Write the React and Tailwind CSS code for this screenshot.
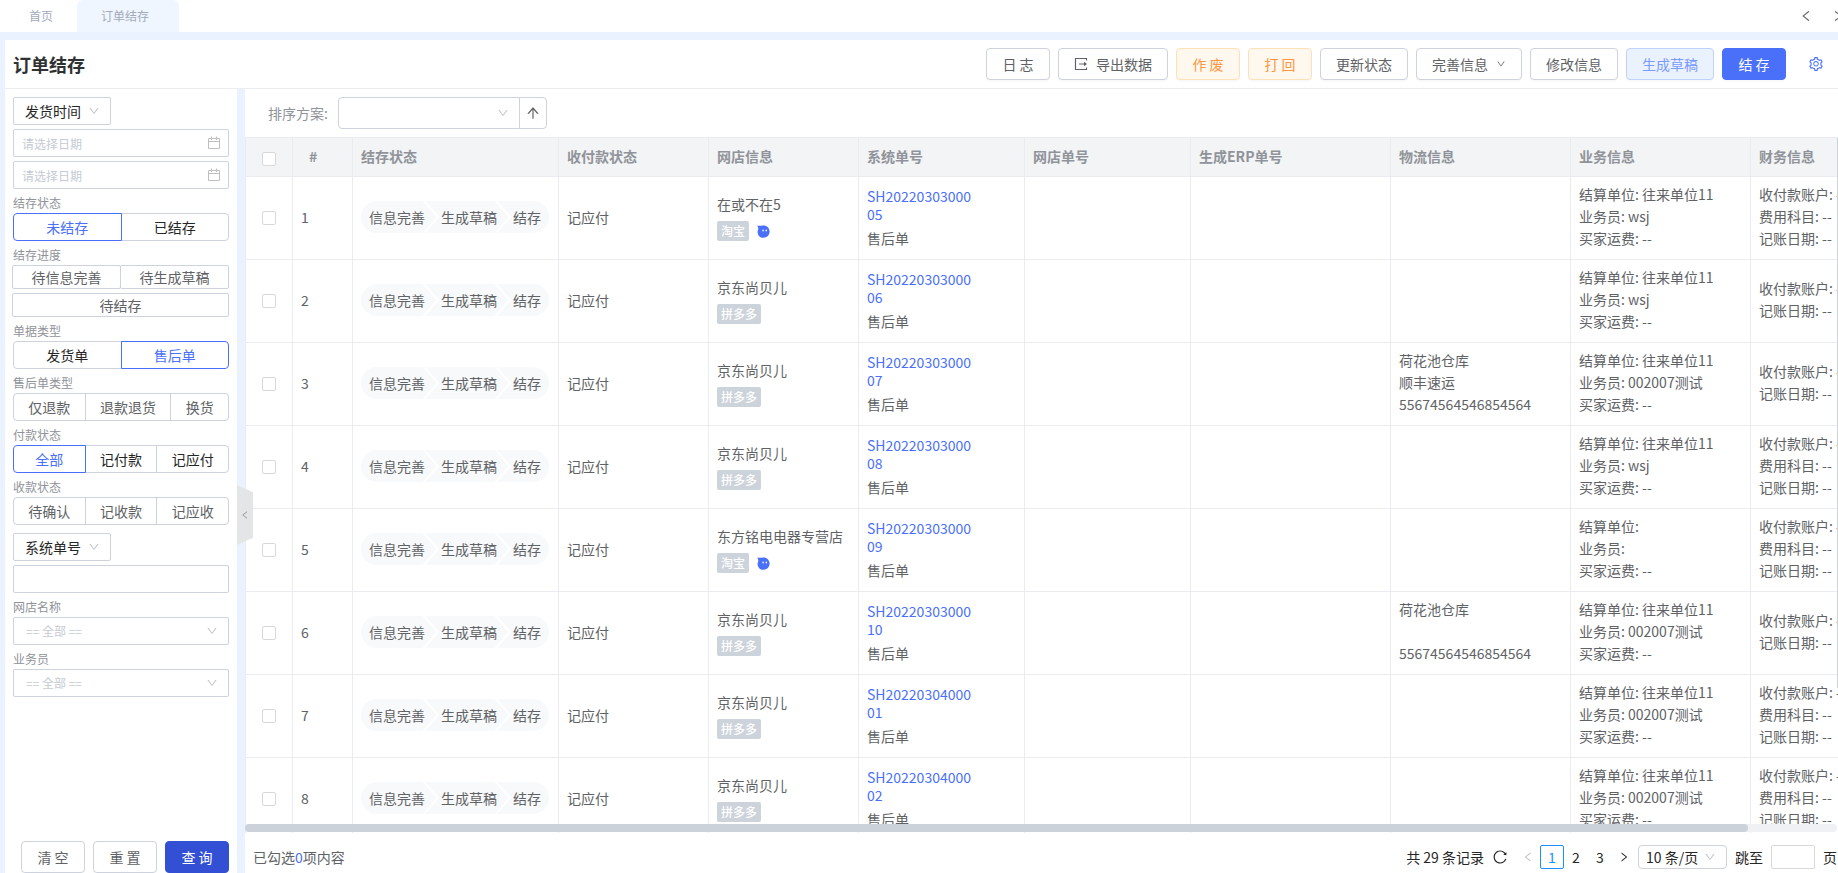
import { useState } from "react";
import {
  AiOutlineArrowUp,
  AiOutlineDown,
  AiOutlineLeft,
  AiOutlineReload,
  AiOutlineRight,
  AiOutlineSetting,
} from "react-icons/ai";

const COLUMNS = [
  { key: "status", label: "结存状态", width: "w-[206px]" },
  { key: "pay", label: "收付款状态", width: "w-[150px]" },
  { key: "shop", label: "网店信息", width: "w-[150px]" },
  { key: "sysNo", label: "系统单号", width: "w-[166px]" },
  { key: "shopNo", label: "网店单号", width: "w-[166px]" },
  { key: "erpNo", label: "生成ERP单号", width: "w-[200px]" },
  { key: "logistics", label: "物流信息", width: "w-[180px]" },
  { key: "business", label: "业务信息", width: "w-[180px]" },
  { key: "finance", label: "财务信息", width: "w-[180px]" },
];

const FULL = ["收付款账户: --", "费用科目: --", "记账日期: --"];
const SHORT = ["收付款账户: --", "记账日期: --"];

const ROWS = [
  { shop: "在或不在5", tag: "淘宝", no: "SH2022030300005", unit: "往来单位11", staff: "wsj", finance: FULL },
  { shop: "京东尚贝儿", tag: "拼多多", no: "SH2022030300006", unit: "往来单位11", staff: "wsj", finance: SHORT },
  {
    shop: "京东尚贝儿",
    tag: "拼多多",
    no: "SH2022030300007",
    logistics: ["荷花池仓库", "顺丰速运", "55674564546854564"],
    unit: "往来单位11",
    staff: "002007测试",
    finance: SHORT,
  },
  { shop: "京东尚贝儿", tag: "拼多多", no: "SH2022030300008", unit: "往来单位11", staff: "wsj", finance: FULL },
  { shop: "东方铭电电器专营店", tag: "淘宝", no: "SH2022030300009", unit: "", staff: "", finance: FULL },
  {
    shop: "京东尚贝儿",
    tag: "拼多多",
    no: "SH2022030300010",
    logistics: ["荷花池仓库", "", "55674564546854564"],
    unit: "往来单位11",
    staff: "002007测试",
    finance: SHORT,
  },
  { shop: "京东尚贝儿", tag: "拼多多", no: "SH2022030400001", unit: "往来单位11", staff: "002007测试", finance: FULL },
  { shop: "京东尚贝儿", tag: "拼多多", no: "SH2022030400002", unit: "往来单位11", staff: "002007测试", finance: FULL },
];

function ExportIcon({ className }) {
  return (
    <svg viewBox="0 0 14 14" className={className} fill="none" stroke="currentColor">
      <path d="M12.5 3.5 V1.5 H1.5 V12.5 H12.5 V10.5" strokeWidth="1.2" />
      <path d="M5 7 H12" strokeWidth="1" />
      <path d="M10 4.8 L13 7 L10 9.2 Z" fill="currentColor" stroke="none" />
    </svg>
  );
}

function CalendarIcon({ className }) {
  return (
    <svg viewBox="0 0 14 14" className={className} fill="none" stroke="currentColor">
      <path d="M1.5 2.5 H12.5 V12.5 H1.5 Z M1.5 5.5 H12.5 M4.5 0.5 V4 M9.5 0.5 V4" />
    </svg>
  );
}

function Checkbox({ label }) {
  return (
    <input
      type="checkbox"
      aria-label={label}
      className="block size-3.5 appearance-none rounded-xs border border-[#d9d9d9] bg-white checked:border-[#4a70fa] checked:bg-[#4a70fa]"
    />
  );
}

function HeadButton({ children, className = "border-[#cdd2dc] bg-white text-[#606266]" }) {
  return (
    <button
      type="button"
      className={`flex h-8 min-w-16 items-center justify-center rounded border px-[15px] whitespace-pre shadow-[0_2px_0_rgba(0,0,0,0.02)] ${className}`}
    >
      {children}
    </button>
  );
}

function SelectBox({ label, value, className, selectClass, iconClass = "right-[11px]", id }) {
  return (
    <div className={`relative ${className}`}>
      <select
        id={id}
        aria-label={label}
        className={`block size-full appearance-none border border-[#cdd2dc] bg-white ${selectClass}`}
      >
        <option>{value}</option>
      </select>
      <AiOutlineDown
        className={`pointer-events-none absolute top-1/2 size-3 -translate-y-1/2 text-[#bfc3c9] ${iconClass}`}
      />
    </div>
  );
}

function FieldLabel({ children, htmlFor }) {
  return (
    <label htmlFor={htmlFor} className="mt-1 block h-5 text-xs leading-5 text-[#909399]">
      {children}
    </label>
  );
}

function ButtonGroup({ label, options, initial = "", muted = false, natural = false }) {
  const [active, setActive] = useState(initial);
  return (
    <div role="group" aria-label={label}>
      <FieldLabel>{label}</FieldLabel>
      <div className="flex">
        {options.map((opt) => (
          <button
            key={opt}
            type="button"
            aria-pressed={active === opt}
            onClick={() => setActive(opt)}
            className={`-ml-px h-7 border first:ml-0 first:rounded-l last:rounded-r ${
              natural ? "flex-auto" : "flex-1"
            } ${
              active === opt
                ? "relative border-[#4a70fa] text-[#4a70fa]"
                : muted
                  ? "border-[#cdd2dc] text-[#606266]"
                  : "border-[#cdd2dc] text-[#262626]"
            }`}
          >
            {opt}
          </button>
        ))}
      </div>
    </div>
  );
}

function DateInput({ label }) {
  return (
    <div className="relative mt-1 h-7">
      <input
        type="text"
        aria-label={label}
        placeholder="请选择日期"
        className="block size-full rounded-xs border border-[#cdd2dc] px-2 text-xs placeholder:text-[#c5cbd4]"
      />
      <CalendarIcon className="pointer-events-none absolute top-1/2 right-2 size-3.5 -translate-y-1/2 text-[#bfbfbf]" />
    </div>
  );
}

function Sidebar() {
  return (
    <aside className="flex w-[232px] shrink-0 flex-col bg-white pt-2 pr-2 pl-2">
      <div className="flex-1">
        <SelectBox
          label="时间类型"
          value="发货时间"
          className="h-7 w-[98px]"
          selectClass="rounded-xs pl-[11px] text-[#262626]"
        />
        <DateInput label="开始日期" />
        <DateInput label="结束日期" />

        <ButtonGroup label="结存状态" options={["未结存", "已结存"]} initial="未结存" />

        <FieldLabel>结存进度</FieldLabel>
        <div className="-ml-px flex flex-wrap gap-y-1 text-[#606266]">
          <button type="button" className="h-6 flex-1 rounded-xs border border-[#cdd2dc] leading-5">
            待信息完善
          </button>
          <button type="button" className="-ml-px h-6 flex-1 rounded-xs border border-[#cdd2dc] leading-5">
            待生成草稿
          </button>
          <button type="button" className="h-6 w-full rounded-xs border border-[#cdd2dc] leading-5">
            待结存
          </button>
        </div>

        <ButtonGroup label="单据类型" options={["发货单", "售后单"]} initial="售后单" />
        <ButtonGroup label="售后单类型" options={["仅退款", "退款退货", "换货"]} muted natural />
        <ButtonGroup label="付款状态" options={["全部", "记付款", "记应付"]} initial="全部" />
        <ButtonGroup label="收款状态" options={["待确认", "记收款", "记应收"]} muted />

        <SelectBox
          label="单号类型"
          value="系统单号"
          className="mt-2 h-7 w-[98px]"
          selectClass="rounded-xs pl-[11px] text-[#262626]"
        />
        <input
          type="text"
          aria-label="单号"
          className="mt-1 block h-7 w-full rounded-xs border border-[#cdd2dc] px-2"
        />

        <FieldLabel htmlFor="shop-name">网店名称</FieldLabel>
        <SelectBox
          id="shop-name"
          value="== 全部 =="
          className="h-7"
          selectClass="rounded-xs pl-3 text-xs text-[#c5cbd4]"
        />
        <FieldLabel htmlFor="staff">业务员</FieldLabel>
        <SelectBox
          id="staff"
          value="== 全部 =="
          className="h-7"
          selectClass="rounded-xs pl-3 text-xs text-[#c5cbd4]"
        />
      </div>

      <div className="flex justify-end gap-2">
        <HeadButton>清 空</HeadButton>
        <HeadButton>重 置</HeadButton>
        <HeadButton className="border-[#334fd4] bg-[#334fd4] text-white">查 询</HeadButton>
      </div>
    </aside>
  );
}

function StepArrow() {
  return (
    <svg viewBox="0 0 16 32" className="h-8 w-4 overflow-visible" fill="none">
      <path d="M-2 -1 L13 16 L-2 33" stroke="#fff" strokeWidth="2" />
    </svg>
  );
}

function Steps() {
  return (
    <div className="flex h-8 w-fit items-center overflow-hidden rounded-full bg-[#f7f9fb] px-2">
      <span>信息完善</span>
      <StepArrow />
      <span>生成草稿</span>
      <StepArrow />
      <span>结存</span>
    </div>
  );
}

function WangwangIcon() {
  return (
    <svg viewBox="0 0 13 13" className="size-[13px]">
      <path d="M0.3 0.6 C2.2 0.9 3.8 0.9 5.6 0.6 C9.6 0.1 12.6 3 12.6 6.6 C12.6 10.1 9.9 12.8 6.4 12.8 C3 12.8 0.6 10.2 0.6 6.9 C0.6 5.7 1 4.7 1.4 3.9 C1.2 2.6 0.9 1.6 0.3 0.6 Z" fill="#4a70fa" />
      <rect x="5.4" y="4.4" width="1.4" height="2" rx="0.7" fill="#fff" />
      <rect x="8.6" y="4.4" width="1.4" height="2" rx="0.7" fill="#fff" />
    </svg>
  );
}

function Lines({ items }) {
  return items.map((text, i) => (
    <div key={i} className="h-[22px] whitespace-nowrap">
      {text}
    </div>
  ));
}

function OrderTable() {
  return (
    <table className="w-[1686px] table-fixed border-separate border-spacing-0 border-l border-[#ebecf2]">
      <thead>
        <tr className="h-10 bg-[#f2f4f5] text-left text-[#909399] [&>th]:border-y [&>th]:border-r [&>th]:border-[#ebecf2]">
          <th className="w-[47px] pl-4 align-middle">
            <div className="pt-1">
              <Checkbox label="全选" />
            </div>
          </th>
          <th className="w-[60px] pb-0.5 pl-4">#</th>
          {COLUMNS.map((col) => (
            <th key={col.key} className={`px-2 pb-0.5 ${col.width}`}>
              {col.label}
            </th>
          ))}
        </tr>
      </thead>
      <tbody>
        {ROWS.map((row, i) => (
          <tr key={row.no} className="h-[83px] [&>td]:border-r [&>td]:border-b [&>td]:border-[#ebecf2]">
            <td className="pl-4">
              <Checkbox label={`选择 ${row.no}`} />
            </td>
            <td className="px-2 pb-0.5">{i + 1}</td>
            <td className="px-2 pb-0.5">
              <Steps />
            </td>
            <td className="px-2 pb-0.5">记应付</td>
            <td className="px-2 pb-0.5">
              <div className="whitespace-nowrap">{row.shop}</div>
              <div className="mt-1.5 flex items-center gap-2">
                <span className="rounded-xs bg-[#cdd3db] px-1 text-xs leading-5 font-medium text-white">{row.tag}</span>
                {row.tag === "淘宝" && <WangwangIcon />}
              </div>
            </td>
            <td className="px-2">
              <a href="#" className="block w-[108px] leading-[18px] break-all text-[#4a70fa]">
                {row.no}
              </a>
              <div className="mt-1">售后单</div>
            </td>
            <td />
            <td />
            <td className="px-2 pb-1">
              <Lines items={row.logistics ?? []} />
            </td>
            <td className="px-2 pb-1">
              <Lines items={[`结算单位: ${row.unit}`, `业务员: ${row.staff}`, "买家运费: --"]} />
            </td>
            <td className="px-2 pb-1">
              <Lines items={row.finance} />
            </td>
          </tr>
        ))}
      </tbody>
    </table>
  );
}

function Pagination() {
  return (
    <nav className="flex h-6 items-center pr-px text-[#262626]">
      <span>共 29 条记录</span>
      <button type="button" aria-label="刷新" className="ml-2">
        <AiOutlineReload className="size-4" />
      </button>
      <button type="button" aria-label="上一页" className="ml-2 flex size-6 items-center justify-center text-[#bfbfbf]">
        <AiOutlineLeft className="size-3" />
      </button>
      <button type="button" className="size-6 rounded-xs border border-[#1890ff] text-[#1890ff]">
        1
      </button>
      <button type="button" className="size-6">
        2
      </button>
      <button type="button" className="size-6">
        3
      </button>
      <button type="button" aria-label="下一页" className="flex size-6 items-center justify-center">
        <AiOutlineRight className="size-3" />
      </button>
      <SelectBox
        label="每页条数"
        value="10 条/页"
        className="ml-0.5 h-6 w-[89px]"
        selectClass="rounded pl-[7px]"
      />
      <label htmlFor="jump" className="ml-2">
        跳至
      </label>
      <input id="jump" type="text" className="mx-2 h-6 w-11 rounded-xs border border-[#d9d9d9] px-1" />
      <span>页</span>
    </nav>
  );
}

function App() {
  return (
    <div className="flex h-screen flex-col overflow-hidden bg-[#ebf2ff] font-['Noto_Sans_CJK_SC',sans-serif] text-sm leading-[22px] text-[#606266]">
      {/* Page tabs */}
      <div className="flex h-8 shrink-0 items-end justify-between bg-white pl-[5px] text-xs text-[#a3aabb]">
        <div className="flex h-8">
          <button type="button" className="w-[72px]">
            首页
          </button>
          <button type="button" className="w-[102px] rounded-t-md bg-[#eff6ff] pl-6 text-left">
            订单结存
          </button>
        </div>
        <div className="-mr-4 flex h-8 text-[#606266]">
          <button type="button" aria-label="向左" className="flex w-8 items-center justify-center">
            <AiOutlineLeft className="size-3.5" />
          </button>
          <button type="button" aria-label="向右" className="flex w-8 items-center justify-center">
            <AiOutlineRight className="size-3.5" />
          </button>
        </div>
      </div>

      <header className="mt-2 ml-[5px] flex h-[49px] shrink-0 items-center justify-between border-b border-[#ebecf2] bg-white pr-3.5 pl-2">
        <h1 className="text-lg font-bold text-[#303133]">订单结存</h1>
        <div className="flex items-center gap-2">
          <HeadButton>日 志</HeadButton>
          <HeadButton>
            <ExportIcon className="mr-2 size-3.5" />
            导出数据
          </HeadButton>
          <HeadButton className="border-[#ffdfb8] bg-[#fff8ee] text-[#ff9540]">作 废</HeadButton>
          <HeadButton className="border-[#ffdfb8] bg-[#fff8ee] text-[#ff9540]">打 回</HeadButton>
          <HeadButton>更新状态</HeadButton>
          <HeadButton>
            完善信息
            <AiOutlineDown className="ml-2 size-2.5" />
          </HeadButton>
          <HeadButton>修改信息</HeadButton>
          <HeadButton className="border-[#bfd3ff] bg-[#ebf2ff] text-[#7a9bff]">生成草稿</HeadButton>
          <HeadButton className="border-[#4a70fa] bg-[#4a70fa] text-white">结 存</HeadButton>
          <button type="button" aria-label="设置" className="ml-3.5 text-[#4a70fa]">
            <AiOutlineSetting className="size-4" />
          </button>
        </div>
      </header>

      <div className="relative flex min-h-0 flex-1 gap-2 pl-[5px]">
        <Sidebar />

        {/* Sidebar collapse handle */}
        <button
          type="button"
          aria-label="收起"
          className="absolute top-[396px] left-[237px] z-10 flex h-[60px] w-4 items-center justify-center bg-[#e4e5e6] text-[#999999] [clip-path:polygon(0_0,100%_12%,100%_88%,0_100%)]"
        >
          <AiOutlineLeft className="size-2.5" />
        </button>

        <main className="flex min-w-0 flex-1 flex-col bg-white">
          <div className="flex h-12 shrink-0 items-center pl-[23px] text-[#909399]">
            <label htmlFor="sort-plan" className="mr-2.5">
              排序方案:
            </label>
            <SelectBox id="sort-plan" value="" className="h-8 w-[182px]" selectClass="rounded-l" />
            <button
              type="button"
              aria-label="升序"
              className="-ml-px flex h-8 w-7 items-center justify-center rounded-r border border-[#cdd2dc] text-[#606266]"
            >
              <AiOutlineArrowUp className="size-4" />
            </button>
          </div>

          <div className="relative min-h-0 flex-1 overflow-hidden">
            <OrderTable />
            {/* Scroll bars */}
            <div className="absolute inset-x-0 bottom-px mr-px h-2 rounded-full bg-[#f0f1f5]">
              <div className="h-2 w-[94.4%] rounded-full bg-[#cbd2d9]" />
            </div>
            <div className="absolute top-px right-0 h-[79%] w-px bg-[#cbd2d9]" />
          </div>

          <footer className="flex h-10 shrink-0 items-start justify-between pt-3 pl-2">
            <p className="flex h-6 items-center">
              已勾选<span className="text-[#4a70fa]">0</span>项内容
            </p>
            <Pagination />
          </footer>
        </main>
      </div>
    </div>
  );
}

export default App;
